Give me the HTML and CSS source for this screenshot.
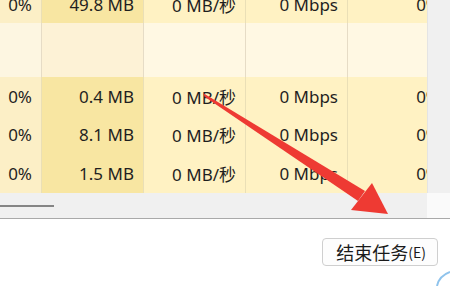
FILE: index.html
```html
<!DOCTYPE html>
<html>
<head>
<meta charset="utf-8">
<link rel="stylesheet" href="styles.css">
</head>
<body>
<div class="page">
  <div class="top">
    <div class="table">
      <div class="row r-data first">
        <div class="c c1">0%</div>
        <div class="c c2">49.8 MB</div>
        <div class="c c3">0 MB/秒</div>
        <div class="c c4">0 Mbps</div>
        <div class="c c5">0%</div>
      </div>
      <div class="row r-empty">
        <div class="c c1"></div>
        <div class="c c2"></div>
        <div class="c c3"></div>
        <div class="c c4"></div>
        <div class="c c5"></div>
      </div>
      <div class="row r-data">
        <div class="c c1">0%</div>
        <div class="c c2">0.4 MB</div>
        <div class="c c3">0 MB/秒</div>
        <div class="c c4">0 Mbps</div>
        <div class="c c5">0%</div>
      </div>
      <div class="row r-data">
        <div class="c c1">0%</div>
        <div class="c c2">8.1 MB</div>
        <div class="c c3">0 MB/秒</div>
        <div class="c c4">0 Mbps</div>
        <div class="c c5">0%</div>
      </div>
      <div class="row r-data last">
        <div class="c c1">0%</div>
        <div class="c c2">1.5 MB</div>
        <div class="c c3">0 MB/秒</div>
        <div class="c c4">0 Mbps</div>
        <div class="c c5">0%</div>
      </div>
    </div>
    <div class="vtrack"></div>
  </div>
  <div class="hscroll">
    <div class="htrack"><div class="thumb"></div></div>
    <div class="corner"></div>
  </div>
  <div class="footer">
    <button class="btn">结束任务<span class="key">(E)</span></button>
  </div>
</div>
<svg class="arrow" width="450" height="286" viewBox="0 0 450 286">
  <polygon points="203,93 205,97 358,201 365,191" fill="#ee3a33"/>
  <polygon points="388,214 351,210 372,183" fill="#ee3a33"/>
</svg>
<svg class="blue-corner" width="14" height="16" viewBox="0 0 14 16">
  <path d="M1 16 Q3 6 14 2" fill="none" stroke="#8fc3ec" stroke-width="2"/>
</svg>
</body>
</html>
```
FILE: styles.css
```css
html, body {
  margin: 0;
  padding: 0;
  width: 450px;
  height: 286px;
  overflow: hidden;
  background: #ffffff;
}
.page {
  width: 450px;
  height: 286px;
  display: flex;
  flex-direction: column;
  font-family: "Noto Sans", "Noto Sans CJK SC", sans-serif;
  color: #1f1f1f;
}
.top {
  display: flex;
  height: 193px;
  overflow: hidden;
}
.table {
  width: 427px;
  overflow: hidden;
  display: flex;
  flex-direction: column;
  margin-top: -15px;
}
.row {
  display: flex;
  flex: none;
}
.r-data { height: 38px; }
.r-data.last { height: 40px; }
.r-empty { height: 54px; }
.c {
  flex: none;
  box-sizing: border-box;
  border-right: 1px solid #eadfb6;
  display: flex;
  align-items: center;
  justify-content: flex-end;
  padding-right: 9px;
  font-size: 17px;
  white-space: nowrap;
}
.c1 { width: 42px; }
.c2 { width: 102px; }
.c3 { width: 102px; }
.c4 { width: 102px; }
.c5 { width: 102px; }
.r-data .c1 { background: #fcefc6; }
.r-data .c2 { background: #f8e6a2; }
.r-data .c3, .r-data .c4, .r-data .c5 { background: #fff2c3; }
.r-empty .c1 { background: #fdf6e1; }
.r-empty .c2 { background: #fdf2d6; }
.r-empty .c3, .r-empty .c4, .r-empty .c5 { background: #fff8e3; }
.r-empty .c { border-right-color: #e6dcc6; }
.vtrack {
  flex: 1;
  background: #f0f0f0;
  border-left: 1px solid #e4e4e4;
}
.hscroll {
  display: flex;
  height: 25px;
  border-bottom: 1px solid #a9a9a9;
}
.htrack {
  width: 427px;
  background: #f0f0f0;
  display: flex;
  align-items: center;
}
.thumb {
  width: 54px;
  height: 2px;
  background: #858585;
}
.corner {
  flex: 1;
  background: #fafafa;
}
.footer {
  flex: 1;
  display: flex;
  justify-content: flex-end;
  align-items: flex-start;
  padding: 19px 12px 0 0;
}
.btn {
  height: 28px;
  padding: 0 11px 0 13px;
  border: 1px solid #cfcfcf;
  border-radius: 4px;
  background: #fdfdfd;
  font-family: "Noto Sans CJK SC", sans-serif;
  font-size: 18px;
  color: #1a1a1a;
  display: flex;
  align-items: center;
  line-height: 1;
}
.key {
  font-size: 14px;
}
.arrow {
  position: absolute;
  left: 0;
  top: 0;
  pointer-events: none;
}
.blue-corner {
  position: absolute;
  right: 0;
  bottom: 0;
}
```
